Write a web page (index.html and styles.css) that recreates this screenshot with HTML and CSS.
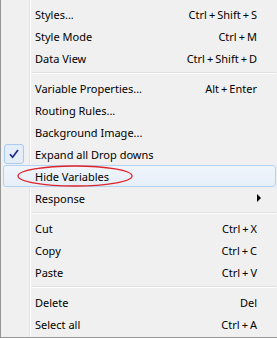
FILE: index.html
```html
<!DOCTYPE html>
<html lang="en">
<head>
  <meta charset="UTF-8" />
  <title>Context menu</title>
  <link rel="stylesheet" href="styles.css">
</head>
<body>

  <div class="menu">
    <div class="item"><span class="gutter"></span><span class="label">Styles...</span><span class="key">Ctrl<i>+</i>Shift<i>+</i>S</span></div>
    <div class="item"><span class="gutter"></span><span class="label">Style Mode</span><span class="key">Ctrl<i>+</i>M</span></div>
    <div class="item"><span class="gutter"></span><span class="label">Data View</span><span class="key">Ctrl<i>+</i>Shift<i>+</i>D</span></div>
    <div class="sep"></div>
    <div class="item"><span class="gutter"></span><span class="label">Variable Properties...</span><span class="key">Alt<i>+</i>Enter</span></div>
    <div class="item"><span class="gutter"></span><span class="label">Routing Rules...</span><span class="key"></span></div>
    <div class="item"><span class="gutter"></span><span class="label">Background Image...</span><span class="key"></span></div>
    <div class="item checked">
      <span class="gutter">
        <span class="checkbox">
          <svg width="10" height="10" viewBox="0 0 10 10"><path d="M1 5.2 L3.6 8.2 L9 1" fill="none" stroke="#1b2a8a" stroke-width="1.7"/></svg>
        </span>
      </span>
      <span class="label">Expand all Drop downs</span><span class="key"></span>
    </div>
    <div class="item hover"><span class="gutter"></span><span class="label">Hide Variables</span><span class="key"></span></div>
    <div class="item"><span class="gutter"></span><span class="label">Response</span><span class="key"><span class="arrow"></span></span></div>
    <div class="sep"></div>
    <div class="item"><span class="gutter"></span><span class="label">Cut</span><span class="key">Ctrl<i>+</i>X</span></div>
    <div class="item"><span class="gutter"></span><span class="label">Copy</span><span class="key">Ctrl<i>+</i>C</span></div>
    <div class="item"><span class="gutter"></span><span class="label">Paste</span><span class="key">Ctrl<i>+</i>V</span></div>
    <div class="sep"></div>
    <div class="item"><span class="gutter"></span><span class="label">Delete</span><span class="key">Del</span></div>
    <div class="item"><span class="gutter"></span><span class="label">Select all</span><span class="key">Ctrl<i>+</i>A</span></div>

    <!-- red mark drawn over the screenshot -->
    <svg class="circle" width="118" height="24" viewBox="0 0 118 24">
      <ellipse cx="59" cy="12" rx="57" ry="10" fill="none" stroke="#e0242a" stroke-width="1.3"/>
    </svg>
  </div>

</body>
</html>
```

FILE: styles.css
```css
body {
  margin: 0;
  padding: 0;
  background: #f0f0f0;
  font-family: 'Noto Sans', 'Segoe UI', sans-serif;
  font-size: 11px;
  color: #000;
}

.menu {
  position: relative;
  width: 273px;
  height: 334px;
  padding: 3px 2px 0 2px;
  border: 1px solid #979797;
  border-top: none;
  background: #f0f0f0;
  background-image: linear-gradient(to right, transparent 28px, #e2e3e3 28px, #e2e3e3 29px, #ffffff 29px, #ffffff 30px, transparent 30px);
}

.item {
  display: flex;
  align-items: center;
  height: 22px;
  box-sizing: border-box;
  border: 1px solid transparent;
  border-radius: 3px;
}

.item.hover {
  border-color: #b4d2f2;
  background: linear-gradient(#f0f5fb, #e6eef8);
}

.gutter {
  width: 31px;
  height: 100%;
  display: flex;
  align-items: center;
}

.checkbox {
  width: 18px;
  height: 18px;
  border: 1px solid #a8cbef;
  border-radius: 3px;
  background: #e4edf8;
  display: flex;
  align-items: center;
  justify-content: center;
}

.label {
  flex: 1;
  white-space: nowrap;
}

.key {
  padding-right: 18px;
  white-space: nowrap;
}

.key i {
  font-style: normal;
  margin: 0 2px;
}

.arrow {
  display: block;
  width: 0;
  height: 0;
  margin-right: -12px;
  border-left: 4px solid #000;
  border-top: 4px solid transparent;
  border-bottom: 4px solid transparent;
}

.sep {
  height: 8px;
  margin-left: 29px;
  background: linear-gradient(transparent 3px, #e0e0e0 3px, #e0e0e0 4px, #ffffff 4px, #ffffff 5px, transparent 5px);
}

.circle {
  position: absolute;
  left: 15px;
  top: 164px;
}
```
